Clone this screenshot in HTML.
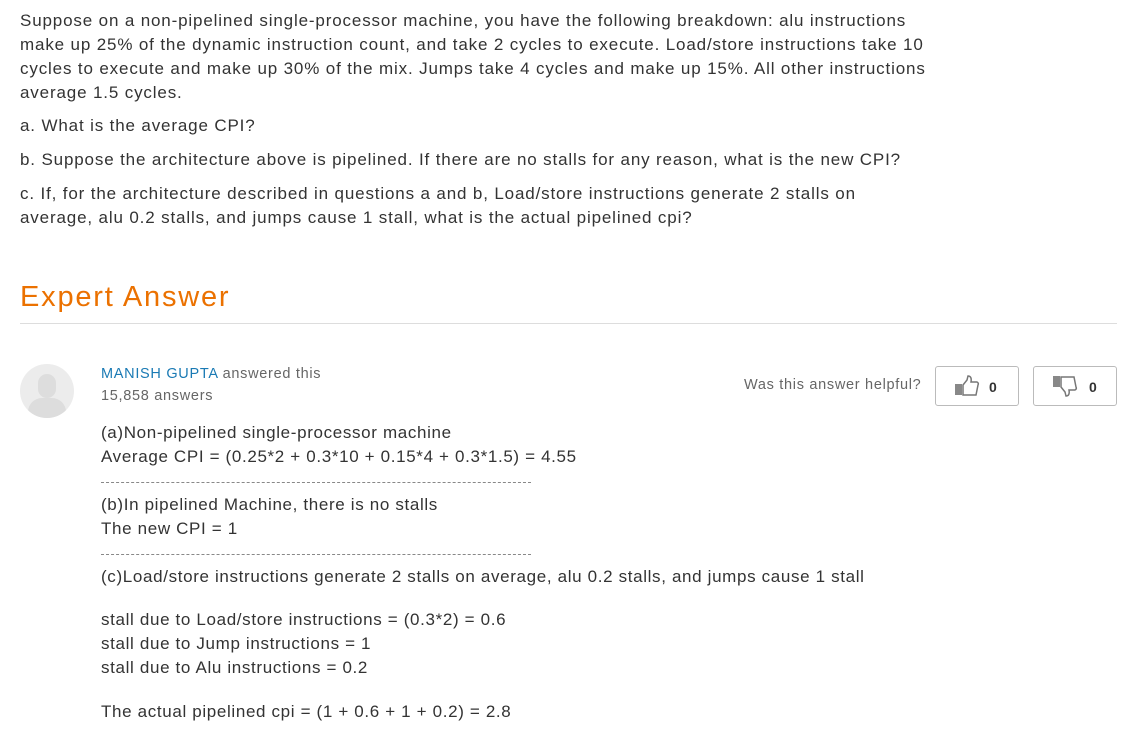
<!DOCTYPE html>
<html><head><meta charset="utf-8"><style>
body{margin:0;background:#fff;font-family:"Liberation Sans",sans-serif;color:#333;}
.t{position:absolute;font-size:17px;letter-spacing:0.85px;line-height:24px;white-space:nowrap;}
.a{letter-spacing:0.65px;}
.d{position:absolute;left:101px;width:430px;border-top:1px dashed #888;}
.s{letter-spacing:0.7px}
</style></head><body>
<div class="t" style="left:20px;top:9px">Suppose on a non-pipelined single-processor machine, you have the following breakdown: alu instructions<br>make up 25% of the dynamic instruction count, and take 2 cycles to execute. Load/store instructions take 10<br>cycles to execute and make up 30% of the mix. Jumps take 4 cycles and make up 15%. All other instructions<br>average 1.5 cycles.</div>
<div class="t" style="left:20px;top:114px">a. What is the average CPI?</div>
<div class="t" style="left:20px;top:148px">b. Suppose the architecture above is pipelined. If there are no stalls for any reason, what is the new CPI?</div>
<div class="t" style="left:20px;top:182px">c. If, for the architecture described in questions a and b, Load/store instructions generate 2 stalls on<br>average, alu 0.2 stalls, and jumps cause 1 stall, what is the actual pipelined cpi?</div>
<div style="position:absolute;left:20px;top:281px;font-size:29px;letter-spacing:1.8px;color:#eb7100">Expert Answer</div>
<div style="position:absolute;left:20px;top:323px;width:1097px;border-top:1px solid #ddd"></div>
<div style="position:absolute;left:20px;top:364px;width:54px;height:54px;border-radius:50%;background:#ececec;overflow:hidden">
<div style="position:absolute;left:18px;top:10px;width:18px;height:24px;border-radius:9px;background:#ddd"></div>
<div style="position:absolute;left:8px;top:34px;width:38px;height:30px;border-radius:14px 14px 0 0;background:#ddd"></div></div>
<div class="s" style="position:absolute;left:101px;top:366px;font-size:14.5px;color:#666"><span style="color:#1a7ab4">MANISH GUPTA</span> answered this</div>
<div class="s" style="position:absolute;left:101px;top:388px;font-size:14.5px;color:#666">15,858 answers</div>
<div class="s" style="position:absolute;left:744px;top:377px;font-size:14.5px;color:#666">Was this answer helpful?</div>
<div style="position:absolute;left:935px;top:366px;width:82px;height:38px;border:1px solid #bbb;border-radius:3px">
<svg style="position:absolute;left:18px;top:8px" width="26" height="22" viewBox="0 0 26 22"><rect x="1" y="9" width="7" height="11" fill="#888"/><path d="M9 10 L13 5 L14 1 Q18 1 17 7 L23 7 Q25 8 24 10 L22 20 L9 20 Z" fill="none" stroke="#777" stroke-width="1.5"/></svg>
<span style="position:absolute;left:53px;top:12px;font-size:14px;font-weight:bold;color:#333">0</span></div>
<div style="position:absolute;left:1033px;top:366px;width:82px;height:38px;border:1px solid #bbb;border-radius:3px">
<svg style="position:absolute;left:18px;top:8px" width="26" height="22" viewBox="0 0 26 22"><rect x="1" y="1" width="7" height="11" fill="#888"/><path d="M9 12 L13 17 L14 21 Q18 21 17 15 L23 15 Q25 14 24 12 L22 2 L9 2 Z" fill="none" stroke="#777" stroke-width="1.5"/></svg>
<span style="position:absolute;left:55px;top:12px;font-size:14px;font-weight:bold;color:#333">0</span></div>
<div class="t a" style="left:101px;top:421px">(a)Non-pipelined single-processor machine<br>Average CPI = (0.25*2 + 0.3*10 + 0.15*4 + 0.3*1.5) = 4.55</div>
<div class="d" style="top:482px"></div>
<div class="t a" style="left:101px;top:493px">(b)In pipelined Machine, there is no stalls<br>The new CPI = 1</div>
<div class="d" style="top:554px"></div>
<div class="t a" style="left:101px;top:565px">(c)Load/store instructions generate 2 stalls on average, alu 0.2 stalls, and jumps cause 1 stall</div>
<div class="t a" style="left:101px;top:608px">stall due to Load/store instructions = (0.3*2) = 0.6<br>stall due to Jump instructions = 1<br>stall due to Alu instructions = 0.2</div>
<div class="t a" style="left:101px;top:700px">The actual pipelined cpi = (1 + 0.6 + 1 + 0.2) = 2.8</div>
</body></html>
